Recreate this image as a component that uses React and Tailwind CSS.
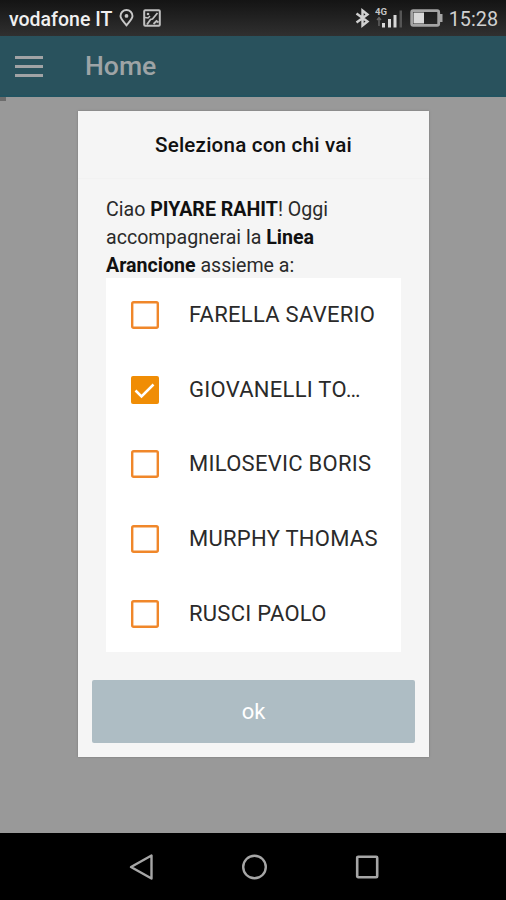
import { useState } from 'react'

const PEOPLE = [
  { id: 1, name: 'FARELLA SAVERIO' },
  { id: 2, name: 'GIOVANELLI TO…' },
  { id: 3, name: 'MILOSEVIC BORIS' },
  { id: 4, name: 'MURPHY THOMAS' },
  { id: 5, name: 'RUSCI PAOLO' },
]

const StatusBar = () => (
  <div className="flex h-9 shrink-0 items-center bg-linear-to-b from-[#141414] to-[#303030] pl-[9px] pr-[8px]">
    <span className="w-[105px] whitespace-nowrap pt-[3px] text-[19.5px] font-medium leading-none text-[#f0f0f0]">vodafone IT</span>
    <svg className="ml-[5px]" width="15" height="18" viewBox="0 0 15 18" fill="none" stroke="#c8c8c8" strokeWidth="1.9">
      <path d="M7.5 16.3C4.5 12.6 1.5 9.8 1.5 7a6 6 0 0 1 12 0c0 2.8-3 5.6-6 9.3z" />
      <circle cx="7.5" cy="6.9" r="1.9" fill="#c8c8c8" stroke="none" />
    </svg>
    <svg className="ml-[9px]" width="18" height="18" viewBox="0 0 18 18" fill="none" stroke="#c0c0c0" strokeWidth="2">
      <rect x="1.2" y="1.2" width="15.6" height="15.6" rx="1" />
      <path d="M4 15.5 7.5 10.5 9.5 10 14.5 4M10.5 15l3-3 2 1.500" strokeWidth="1.8" />
      <path d="M2 8.500 5 9l2-2" strokeWidth="1.5" />
      <circle cx="5" cy="5" r="1.3" fill="#c0c0c0" stroke="none" />
    </svg>
    <div className="grow" />
    <svg width="15" height="20" viewBox="0 0 15 20" fill="none" stroke="#d0d0d0" strokeWidth="2.4">
      <path d="M1.5 5.5 12.5 13.5 7.5 17.5V2.5l5 4L1.5 14.5" />
    </svg>
    <svg className="ml-[5px]" width="29" height="22" viewBox="0 0 29 22">
      <text x="0" y="8" fill="#c4c4c4" fontSize="9.5" fontWeight="700" textLength="12" lengthAdjust="spacingAndGlyphs">4G</text>
      <path d="M4 19V11M2 13l2-2.5L6 13" fill="none" stroke="#666" strokeWidth="1.4" />
      <path d="M7 16h3v4.500H7z M13 12h3v8.5h-3z M18.500 8h3v12.500h-3z" fill="#d8d8d8" />
      <path d="M24.500 3.500h2.500v17h-2.500z" fill="#555" />
    </svg>
    <svg className="ml-[6px]" width="33" height="18" viewBox="0 0 33 18">
      <rect x="1.7" y="1.7" width="27" height="14.6" rx="1.5" fill="none" stroke="#a4a4a4" strokeWidth="2.8" />
      <path d="M29.500 5h3v8h-3z" fill="#a4a4a4" />
      <path d="M3.500 3.500h10.500v11h-10.500z" fill="#d8d8d8" />
    </svg>
    <span className="ml-[5px] w-[50px] whitespace-nowrap pt-[3px] text-right text-[19.8px] leading-none text-[#d0d0d0]">15:28</span>
  </div>
)

const Header = () => (
  <header className="flex h-[61px] shrink-0 items-center border-b-2 border-[#225360] bg-[#29525d] pl-[15px]">
    <button className="flex w-7 flex-col gap-[6px] pt-[2px]">
      <span className="h-[3px] w-full bg-[#a1a3a5]" />
      <span className="h-[3px] w-full bg-[#a1a3a5]" />
      <span className="h-[3px] w-full bg-[#a1a3a5]" />
    </button>
    <h1 className="ml-[42px] pt-px text-[26.6px] font-medium leading-none text-[#9ea4a6]">Home</h1>
  </header>
)

const CheckRow = ({ person, checked, onToggle }) => (
  <button onClick={onToggle} className="flex h-[74.6px] w-full items-center pl-[25px] text-left">
    {checked ? (
      <svg className="shrink-0" width="28" height="28" viewBox="0 0 28 28">
        <rect width="28" height="28" rx="2" fill="#f08d05" />
        <path d="M4.5 14.5 10.5 20.5 22.5 8.5" fill="none" stroke="#fff" strokeWidth="2.5" />
      </svg>
    ) : (
      <svg className="shrink-0" width="28" height="28" viewBox="0 0 28 28">
        <rect x="1.2" y="1.2" width="25.6" height="25.6" rx="1.5" fill="none" stroke="#f0872a" strokeWidth="2.4" />
      </svg>
    )}
    <span className="ml-[30px] whitespace-nowrap text-[22px] leading-[28px] tracking-[0.27px] text-[#2a2a2a]">{person.name}</span>
  </button>
)

const NavBar = () => (
  <nav className="flex h-[67px] shrink-0 items-center justify-center gap-[86px] bg-black pl-[2px]">
    <svg width="27" height="28" viewBox="0 0 27 28" fill="none" stroke="#a6a6a6" strokeWidth="2.4">
      <path d="M23.5 2.5v23L3 14z" strokeLinejoin="round" />
    </svg>
    <svg width="27" height="28" viewBox="0 0 27 28" fill="none" stroke="#a6a6a6" strokeWidth="2.4">
      <circle cx="13.5" cy="14" r="11.3" />
    </svg>
    <svg width="27" height="28" viewBox="0 0 27 28" fill="none" stroke="#a6a6a6" strokeWidth="2.6">
      <rect x="3.2" y="3.7" width="20" height="20.5" rx="1" />
    </svg>
  </nav>
)

const App = () => {
  const [selected, setSelected] = useState([2])

  const toggle = (id) => {
    setSelected((prev) => (prev.includes(id) ? prev.filter((x) => x !== id) : [...prev, id]))
  }

  return (
    <div className="flex h-[900px] w-[506px] flex-col overflow-hidden bg-black font-[Roboto,sans-serif]">
      <StatusBar />
      <Header />

      <main className="relative flex grow items-start bg-[#999] pl-[78px] pt-[14px]">
        <div className="absolute left-0 top-0 h-1 w-[6px] bg-[#6c6c6c]" />
        <div className="flex h-[646px] w-[351px] flex-col bg-[#f5f5f5] shadow-[0_0_2px_#777]">
          <h2 className="flex h-[68px] shrink-0 items-center justify-center border-b border-[#f2f2f2] pt-[2px] text-[20.6px] font-medium tracking-[0.2px] text-[#111]">
            Seleziona con chi vai
          </h2>
          <div className="px-7 pt-[17px]">
            <p className="h-[82px] whitespace-nowrap text-[19.6px] leading-[28px] text-[#2a2a2a]">
              Ciao <b className="text-[#111]">PIYARE RAHIT</b>! Oggi<br />
              accompagnerai la <b className="text-[#111]">Linea<br />Arancione</b> assieme a:
            </p>
            <div className="h-[374px] bg-white">
              {PEOPLE.map((p) => (
                <CheckRow key={p.id} person={p} checked={selected.includes(p.id)} onToggle={() => toggle(p.id)} />
              ))}
            </div>
          </div>
          <button className="mx-[14px] mt-[28px] h-[63px] rounded-[2px] bg-[#aebdc4] text-[22px] text-white">ok</button>
        </div>
      </main>

      <NavBar />
    </div>
  )
}

export default App
